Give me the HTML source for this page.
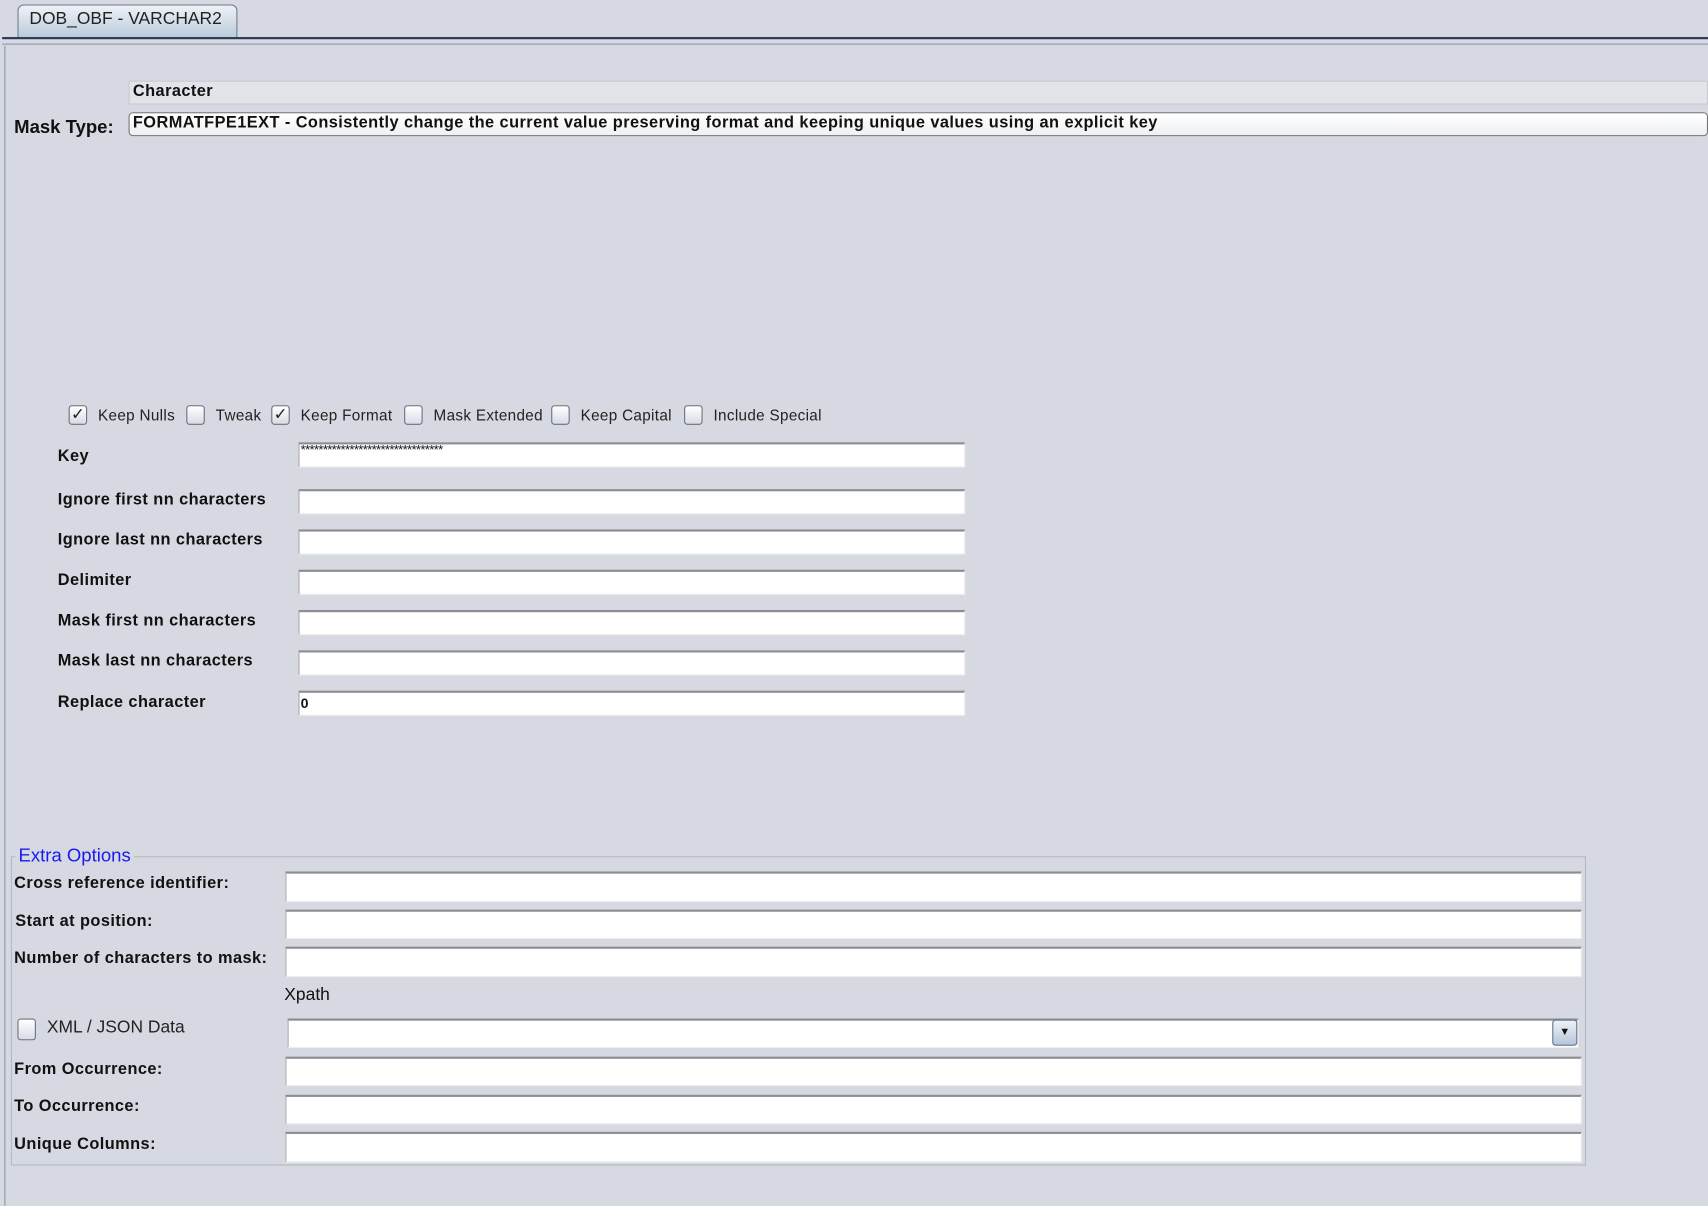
<!DOCTYPE html>
<html><head><style>
html,body{margin:0;padding:0;width:1708px;height:1206px;overflow:hidden;background:#d6d9e1;}
#w{position:absolute;left:0;top:0;width:1568px;height:1107px;transform:scale(1.0893);transform-origin:0 0;font-family:"Liberation Sans",Arial,sans-serif;color:#111;}
.a{position:absolute;}
.b{font-weight:bold;font-size:15px;letter-spacing:0.4px;}
.in{position:absolute;background:#fff;border-top:2px solid #8a8d92;border-left:1px solid #aaa;border-bottom:1px solid #eee;border-right:1px solid #eee;box-sizing:border-box;}
.cb{position:absolute;width:17px;height:18px;box-sizing:border-box;border:1px solid #6c7280;border-radius:3px;background:linear-gradient(#fff,#d8dce4);font-size:15px;line-height:16px;text-align:center;color:#222;}
.cl{position:absolute;font-size:14px;letter-spacing:0.3px;color:#222;}
</style></head><body><div id="w">
<div class="a" style="left:16px;top:4px;width:202px;height:31px;border:1px solid #6d7788;border-bottom:none;border-radius:6px 6px 0 0;background:linear-gradient(#eef2f7,#b9cadb);box-sizing:border-box;"></div>
<div class="a" style="left:27px;top:9px;font-size:16px;color:#222;">DOB_OBF - VARCHAR2</div>
<div class="a" style="left:2px;top:34px;width:1566px;height:2px;background:#2e3a55;"></div>
<div class="a" style="left:2px;top:40px;width:1566px;height:1px;background:#8d96a8;"></div>
<div class="a" style="left:4px;top:42px;width:1px;height:1065px;background:#8d96a8;"></div>
<div class="a" style="left:118px;top:74px;width:1450px;height:22px;background:#e2e4e9;border:1px solid #c6c9cf;box-sizing:border-box;"></div>
<div class="a b" style="left:122px;top:75px;">Character</div>
<div class="a" style="left:13px;top:107px;font-weight:bold;font-size:17px;">Mask Type:</div>
<div class="a" style="left:118px;top:103px;width:1450px;height:22px;background:linear-gradient(#fff,#eef0f3);border:1px solid #777;border-radius:4px;box-sizing:border-box;"></div>
<div class="a b" style="left:122px;top:104px;">FORMATFPE1EXT - Consistently change the current value preserving format and keeping unique values using an explicit key</div>

<div class="cb" style="left:63px;top:372px;">✓</div><div class="cl" style="left:90px;top:373px;">Keep Nulls</div>
<div class="cb" style="left:171px;top:372px;"></div><div class="cl" style="left:198px;top:373px;">Tweak</div>
<div class="cb" style="left:249px;top:372px;">✓</div><div class="cl" style="left:276px;top:373px;">Keep Format</div>
<div class="cb" style="left:371px;top:372px;"></div><div class="cl" style="left:398px;top:373px;">Mask Extended</div>
<div class="cb" style="left:506px;top:372px;"></div><div class="cl" style="left:533px;top:373px;">Keep Capital</div>
<div class="cb" style="left:628px;top:372px;"></div><div class="cl" style="left:655px;top:373px;">Include Special</div>

<div class="a b" style="left:53px;top:410px;">Key</div><div class="in" style="left:274px;top:406px;width:612px;height:23px;font-size:12px;line-height:11px;padding-left:1px;letter-spacing:-0.6px;">********************************</div>
<div class="a b" style="left:53px;top:450px;">Ignore first nn characters</div><div class="in" style="left:274px;top:449px;width:612px;height:23px;"></div>
<div class="a b" style="left:53px;top:487px;">Ignore last nn characters</div><div class="in" style="left:274px;top:486px;width:612px;height:23px;"></div>
<div class="a b" style="left:53px;top:524px;">Delimiter</div><div class="in" style="left:274px;top:523px;width:612px;height:23px;"></div>
<div class="a b" style="left:53px;top:561px;">Mask first nn characters</div><div class="in" style="left:274px;top:560px;width:612px;height:23px;"></div>
<div class="a b" style="left:53px;top:598px;">Mask last nn characters</div><div class="in" style="left:274px;top:597px;width:612px;height:23px;"></div>
<div class="a b" style="left:53px;top:636px;">Replace character</div><div class="in b" style="left:274px;top:634px;width:612px;height:23px;font-size:13px;line-height:20px;padding-left:1px;">0</div>

<div class="a" style="left:10px;top:786px;width:1446px;height:284px;border:1px solid #b5b9c0;box-sizing:border-box;"></div>
<div class="a" style="left:14px;top:776px;padding:0 3px;background:#d6d9e1;color:#1a1aee;font-size:17px;">Extra Options</div>
<div class="a b" style="left:13px;top:802px;">Cross reference identifier:</div><div class="in" style="left:262px;top:800px;width:1190px;height:28px;"></div>
<div class="a b" style="left:14px;top:837px;">Start at position:</div><div class="in" style="left:262px;top:835px;width:1190px;height:27px;"></div>
<div class="a b" style="left:13px;top:871px;">Number of characters to mask:</div><div class="in" style="left:262px;top:869px;width:1190px;height:28px;"></div>
<div class="a" style="left:261px;top:905px;font-size:16px;">Xpath</div>
<div class="cb" style="left:16px;top:935px;height:20px;"></div><div class="a" style="left:43px;top:935px;font-size:16px;color:#222;">XML / JSON Data</div>
<div class="in" style="left:264px;top:935px;width:1185px;height:27px;"></div>
<div class="a" style="left:1425px;top:936px;width:23px;height:24px;border:1px solid #5d6f8c;border-radius:3px;background:linear-gradient(#eef2f7,#b7c6d8);box-sizing:border-box;font-size:10px;text-align:center;line-height:22px;">▼</div>
<div class="a b" style="left:13px;top:973px;">From Occurrence:</div><div class="in" style="left:262px;top:970px;width:1190px;height:27px;"></div>
<div class="a b" style="left:13px;top:1007px;">To Occurrence:</div><div class="in" style="left:262px;top:1005px;width:1190px;height:27px;"></div>
<div class="a b" style="left:13px;top:1042px;">Unique Columns:</div><div class="in" style="left:262px;top:1039px;width:1190px;height:28px;"></div>
</div></body></html>
